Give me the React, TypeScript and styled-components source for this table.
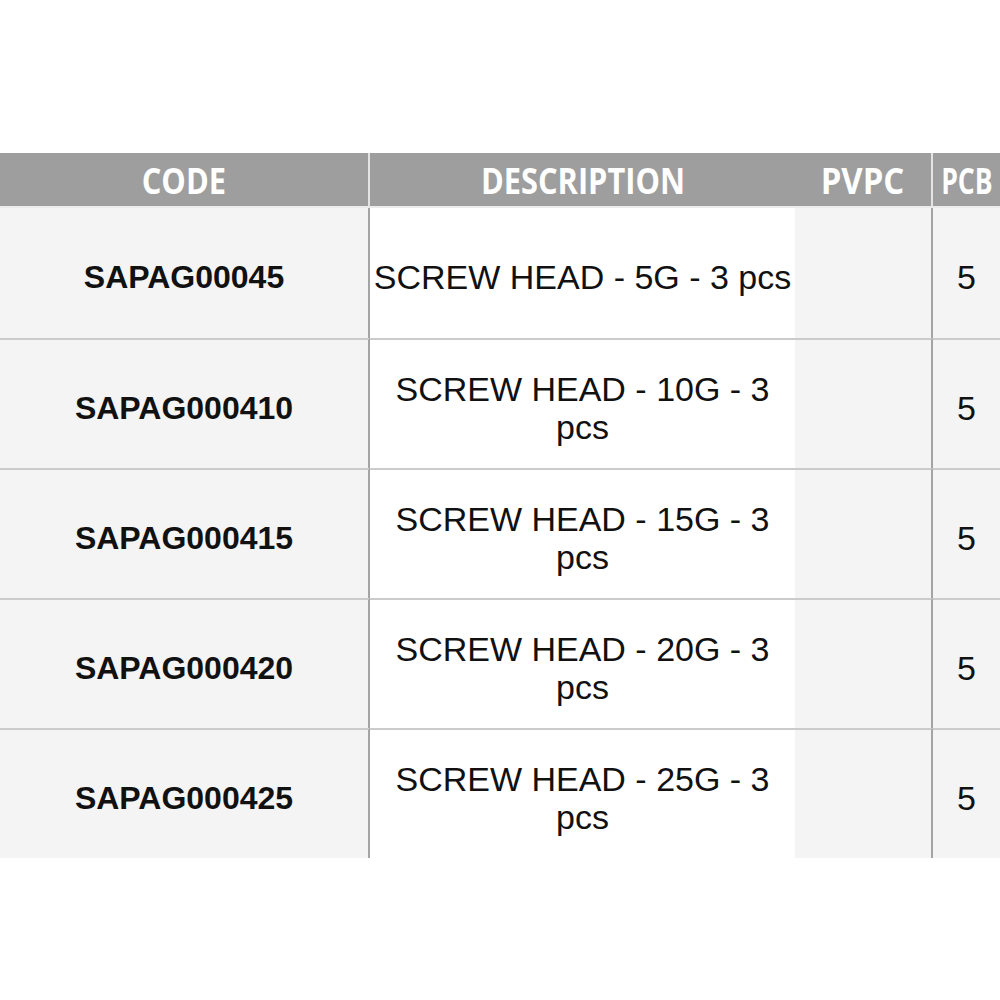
import React from "react";
import styled, { createGlobalStyle } from "styled-components";

const rows = [
    { code: "SAPAG00045", description: "SCREW HEAD - 5G - 3 pcs", pvpc: "", pcb: "5" },
    { code: "SAPAG000410", description: "SCREW HEAD - 10G - 3 pcs", pvpc: "", pcb: "5" },
    { code: "SAPAG000415", description: "SCREW HEAD - 15G - 3 pcs", pvpc: "", pcb: "5" },
    { code: "SAPAG000420", description: "SCREW HEAD - 20G - 3 pcs", pvpc: "", pcb: "5" },
    { code: "SAPAG000425", description: "SCREW HEAD - 25G - 3 pcs", pvpc: "", pcb: "5" },
];

const GlobalStyle = createGlobalStyle`
    html, body {
        margin: 0;
        padding: 0;
        background: #ffffff;
        overflow: hidden;
    }
`;

const Page = styled.div`
    width: 1000px;
    height: 1000px;
    padding-top: 153px;
    box-sizing: border-box;
    background: #ffffff;
`;

const Grid = styled.div`
    display: grid;
    grid-template-columns: 370px 425px 138px 67px;
    width: 1000px;
`;

const HeadCell = styled.div<{ $sep?: boolean }>`
    height: 55px;
    box-sizing: border-box;
    background: #9e9e9e;
    border-bottom: 2px solid #ececec;
    border-right: ${p => (p.$sep ? "2px solid #e4e4e4" : "none")};
    display: flex;
    align-items: center;
    justify-content: center;
    padding-top: 2px;
    overflow: hidden;
`;

const HeadLabel = styled.span<{ $scale?: number }>`
    display: inline-block;
    font-family: "Open Sans", "DejaVu Sans", sans-serif;
    font-weight: 700;
    font-size: 35px;
    line-height: 1;
    color: #ffffff;
    transform: scaleX(${p => p.$scale ?? 0.88});
    white-space: nowrap;
`;

const Cell = styled.div<{ $shade?: boolean; $sep?: boolean; $first?: boolean }>`
    height: 130px;
    box-sizing: border-box;
    background: ${p => (p.$shade ? "#f4f4f4" : "#ffffff")};
    border-top: ${p => (p.$first ? "none" : "2px solid #cbcbcb")};
    border-right: ${p => (p.$sep ? "2px solid #a4a4a4" : "none")};
    display: flex;
    align-items: center;
    justify-content: center;
    padding: 8px 3px 0;
    text-align: center;
    font-family: "Liberation Sans", Arial, sans-serif;
    font-size: 34px;
    line-height: 38px;
    color: #111111;
`;

const Code = styled.span`
    font-weight: 700;
    font-size: 32px;
`;

export default function App() {
    return (
        <Page>
            <GlobalStyle />
            <Grid>
                <HeadCell $sep>
                    <HeadLabel>CODE</HeadLabel>
                </HeadCell>
                <HeadCell>
                    <HeadLabel>DESCRIPTION</HeadLabel>
                </HeadCell>
                <HeadCell $sep>
                    <HeadLabel $scale={0.94}>PVPC</HeadLabel>
                </HeadCell>
                <HeadCell>
                    <HeadLabel $scale={0.76}>PCB</HeadLabel>
                </HeadCell>
                {rows.map((r, i) => (
                    <React.Fragment key={r.code}>
                        <Cell $shade $sep $first={i === 0}>
                            <Code>{r.code}</Code>
                        </Cell>
                        <Cell $first={i === 0}>{r.description}</Cell>
                        <Cell $shade $sep $first={i === 0}>
                            {r.pvpc}
                        </Cell>
                        <Cell $shade $first={i === 0}>
                            {r.pcb}
                        </Cell>
                    </React.Fragment>
                ))}
            </Grid>
        </Page>
    );
}
